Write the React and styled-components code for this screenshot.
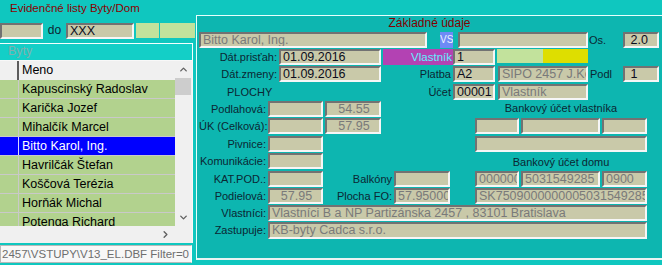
import React from 'react'
import styled, { createGlobalStyle } from 'styled-components'
import { ChevronUp, ChevronDown, ChevronRight } from 'lucide-react'

const GlobalStyle = createGlobalStyle`
  html, body {
    margin: 0;
    padding: 0;
    background: #0fc7bf;
  }
  body {
    font-family: "Liberation Sans", Arial, sans-serif;
  }
`

const Screen = styled.div`
  width: 662px;
  height: 265px;
  overflow: hidden;
  background: #0fc7bf;
  display: flex;
  flex-direction: column;
`

const TitleBar = styled.div`
  height: 15px;
  flex: none;
  padding-left: 10px;
  color: #8a0000;
  font-size: 11.5px;
  line-height: 17px;
`

const Main = styled.div`
  display: flex;
  align-items: flex-start;
  flex: 1;
  min-height: 0;
`

/* ---------- left side: list of flats ---------- */

const LeftCol = styled.div`
  width: 196px;
  flex: none;
  display: flex;
  flex-direction: column;
  padding-top: 8px;
`

const FilterRow = styled.div`
  display: flex;
  align-items: flex-start;
  height: 16px;
`

const DoLabel = styled.div`
  width: 23px;
  text-align: center;
  font-size: 12px;
  line-height: 15px;
  color: #0c2632;
`

const GreenCell = styled.div`
  width: ${p => p.$w}px;
  height: 15px;
  margin-left: ${p => p.$gap}px;
  background: #c2e29c;
  flex: none;
`

const BytyHeader = styled.div`
  box-sizing: border-box;
  width: 193px;
  height: 17px;
  margin-top: 4px;
  border-top: 1px solid #f4ffff;
  border-right: 1px solid #f4ffff;
  background: #13cfc7;
  color: #7fb0ae;
  font-size: 12.5px;
  line-height: 15px;
  padding-left: 8px;
`

const GridBox = styled.div`
  box-sizing: border-box;
  width: 193px;
  border-top: 1px solid #f8f8f8;
  border-right: 1px solid #f8f8f8;
  background: #f0f0f0;
  display: flex;
  flex-direction: column;
`

const GridTop = styled.div`
  display: flex;
  height: 165px;
`

const Table = styled.div`
  width: 175px;
  display: flex;
  flex-direction: column;
  overflow: hidden;
`

const HeadRow = styled.div`
  display: flex;
  height: 19px;
  flex: none;
  background: #f0f0f0;
  font-size: 12.5px;
  line-height: 19px;
`

const HeadFirst = styled.div`
  width: 17px;
  border-right: 2px solid #5c5c5c;
`

const HeadName = styled.div`
  padding-left: 3px;
  color: #000;
`

const DataRow = styled.div`
  box-sizing: border-box;
  display: flex;
  height: 19px;
  flex: none;
  background: ${p => (p.$sel ? '#0000ff' : '#b2d28e')};
  border-bottom: 1px solid #c9c9c9;
  font-size: 12.5px;
  line-height: 18px;
  color: ${p => (p.$sel ? '#ffffff' : '#000000')};
`

const RowMark = styled.div`
  width: 18px;
  border-right: 1px solid ${p => (p.$sel ? '#d8d8ff' : '#c9c9c9')};
`

const RowName = styled.div`
  padding-left: 3px;
  white-space: nowrap;
`

const VScroll = styled.div`
  width: 16px;
  display: flex;
  flex-direction: column;
  background: #f0f0f0;
  color: #606060;
`

const ArrowBox = styled.div`
  height: 17px;
  display: flex;
  align-items: center;
  justify-content: center;
  flex: none;
`

const Thumb = styled.div`
  height: 17px;
  background: #cdcdcd;
  flex: none;
`

const ScrollFill = styled.div`
  flex: 1;
`

const HScroll = styled.div`
  height: 17px;
  display: flex;
  align-items: center;
  justify-content: flex-end;
  padding-right: 21px;
  color: #606060;
`

const StatusBar = styled.div`
  box-sizing: border-box;
  width: 192px;
  height: 18px;
  margin-top: 2px;
  background: #f7f7f7;
  border: 1px solid #b8b8b8;
  border-right-color: #ffffff;
  display: flex;
  justify-content: flex-end;
  overflow: hidden;
  white-space: nowrap;
  color: #6e6e6e;
  font-size: 11.5px;
  line-height: 16px;
  padding-right: 2px;
`

/* ---------- right side: form ---------- */

const RightPanel = styled.div`
  box-sizing: border-box;
  flex: 1;
  height: 245px;
  border-top: 1px solid #e6fffc;
  border-left: 1px solid #e6fffc;
  border-bottom: 2px solid #e8f4f2;
  background: #0db6b0;
`

const PanelTitle = styled.div`
  height: 15px;
  text-align: center;
  color: #820000;
  font-size: 12px;
  line-height: 15px;
`

const Form = styled.div`
  padding: 1px 0 0 2px;
  display: flex;
  flex-direction: column;
`

const Row = styled.div`
  display: flex;
  align-items: flex-start;
  height: 16px;
  margin-top: ${p => p.$mt || 0}px;
`

const Label = styled.div`
  box-sizing: border-box;
  width: ${p => p.$w}px;
  flex: none;
  text-align: ${p => p.$align || 'right'};
  padding: ${p => p.$pad || '0 2px 0 0'};
  color: #0b2733;
  font-size: 11px;
  line-height: 16px;
  white-space: nowrap;
`

const Field = styled.div`
  box-sizing: border-box;
  width: ${p => p.$w}px;
  height: ${p => p.$h || 16}px;
  margin-left: ${p => p.$ml || 0}px;
  flex: none;
  background: #c9c9a9;
  border-style: solid;
  border-width: 2px;
  border-color: #727272 #f6f6f6 #f6f6f6 #727272;
  color: ${p => (p.$dim ? '#7a7a7a' : '#0c0c1c')};
  font-size: 12.5px;
  line-height: 13px;
  padding-left: 2px;
  white-space: nowrap;
  overflow: hidden;
  text-align: ${p => (p.$center ? 'center' : 'left')};
`

const Tag = styled.div`
  box-sizing: border-box;
  width: ${p => p.$w}px;
  height: ${p => p.$h || 16}px;
  margin-left: ${p => p.$ml || 0}px;
  flex: none;
  background: ${p => p.$bg};
  color: ${p => p.$fg || 'transparent'};
  font-size: ${p => p.$fs || 11.5}px;
  line-height: 16px;
  text-align: ${p => p.$align || 'right'};
  padding-right: ${p => p.$pr || 0}px;
  overflow: hidden;
  white-space: nowrap;
`

const LowerGrid = styled.div`
  display: grid;
  grid-template-columns: 252px 172px;
  grid-template-rows: 17px 18px 17px 18px 17px 17px 17px 17px;
  column-gap: 24px;
  margin-top: 1px;
`

const GridRow = styled.div`
  display: flex;
  align-items: flex-start;
  height: 16px;
  grid-column: ${p => (p.$wide ? '1 / -1' : 'auto')};
`

const BankLabel = styled.div`
  text-align: center;
  color: #0b2733;
  font-size: 11px;
  line-height: ${p => p.$lh || 16}px;
`

const people = [
  'Kapuscinský Radoslav',
  'Karička Jozef',
  'Mihalčík Marcel',
  'Bitto Karol, Ing.',
  'Havrilčák Štefan',
  'Koščová Terézia',
  'Horňák Michal',
  'Potenga Richard',
]

const App = () => {
  return (
    <Screen>
      <GlobalStyle />
      <TitleBar>Evidenčné listy Byty/Dom</TitleBar>
      <Main>
        <LeftCol>
          <FilterRow>
            <Field $w={43} />
            <DoLabel>do</DoLabel>
            <Field $w={68}>XXX</Field>
            <GreenCell $w={23} $gap={2} />
            <GreenCell $w={35} $gap={1} />
          </FilterRow>
          <BytyHeader>Byty</BytyHeader>
          <GridBox>
            <GridTop>
              <Table>
                <HeadRow>
                  <HeadFirst />
                  <HeadName>Meno</HeadName>
                </HeadRow>
                {people.map(name => {
                  const sel = name === 'Bitto Karol, Ing.'
                  return (
                    <DataRow key={name} $sel={sel}>
                      <RowMark $sel={sel} />
                      <RowName>{name}</RowName>
                    </DataRow>
                  )
                })}
              </Table>
              <VScroll>
                <ArrowBox>
                  <ChevronUp size={11} strokeWidth={3} />
                </ArrowBox>
                <Thumb />
                <ScrollFill />
                <ArrowBox>
                  <ChevronDown size={11} strokeWidth={3} />
                </ArrowBox>
              </VScroll>
            </GridTop>
            <HScroll>
              <ChevronRight size={11} strokeWidth={3} />
            </HScroll>
          </GridBox>
          <StatusBar>2457\VSTUPY\V13_EL.DBF Filter=0</StatusBar>
        </LeftCol>

        <RightPanel>
          <PanelTitle>Základné údaje</PanelTitle>
          <Form>
            <Row>
              <Field $w={228} $dim>Bitto Karol, Ing.</Field>
              <Tag $w={13} $ml={13} $bg="#6d8af6" $fg="#eef2ff" $align="center" $fs={10}>VS</Tag>
              <Field $w={130} $ml={5} />
              <Label $w={35} $align="left" $pad="0 0 0 1px">Os.</Label>
              <Field $w={36}>&nbsp;2.0</Field>
            </Row>
            <Row $mt={1}>
              <Label $w={80}>Dát.prisťah:</Label>
              <Field $w={102}>01.09.2016</Field>
              <Tag $w={70} $ml={2} $bg="#b342b3" $fg="#5ff0ff" $pr={1}>Vlastník</Tag>
              <Field $w={42}>1</Field>
              <Tag $w={46} $h={14} $ml={2} $bg="#c2e29c" />
              <Tag $w={45} $h={14} $bg="#dede00" />
            </Row>
            <Row $mt={1}>
              <Label $w={80}>Dát.zmeny:</Label>
              <Field $w={102}>01.09.2016</Field>
              <Label $w={72}>Platba</Label>
              <Field $w={42}>A2</Field>
              <Field $w={90} $ml={3} $dim>SIPO 2457 J.Ko</Field>
              <Label $w={35} $align="left" $pad="0 0 0 2px">Podl</Label>
              <Field $w={36}>&nbsp;1</Field>
            </Row>
            <Row $mt={2}>
              <Label $w={80} $align="left" $pad="0 0 0 28px">PLOCHY</Label>
              <Label $w={174}>Účet</Label>
              <Field $w={42}>00001</Field>
              <Field $w={90} $ml={3} $dim>Vlastník</Field>
            </Row>

            <LowerGrid>
              <GridRow>
                <Label $w={69}>Podlahová:</Label>
                <Field $w={55} />
                <Field $w={56} $ml={2} $dim $center>54.55</Field>
              </GridRow>
              <BankLabel $lh={14}>Bankový účet vlastníka</BankLabel>

              <GridRow>
                <Label $w={69}>ÚK (Celková):</Label>
                <Field $w={55} />
                <Field $w={56} $ml={2} $dim $center>57.95</Field>
              </GridRow>
              <GridRow>
                <Field $w={44} />
                <Field $w={79} $ml={2} />
                <Field $w={45} $ml={2} />
              </GridRow>

              <GridRow>
                <Label $w={69}>Pivnice:</Label>
                <Field $w={55} />
              </GridRow>
              <GridRow>
                <Field $w={172} />
              </GridRow>

              <GridRow>
                <Label $w={69}>Komunikácie:</Label>
                <Field $w={55} />
              </GridRow>
              <BankLabel $lh={18}>Bankový účet domu</BankLabel>

              <GridRow>
                <Label $w={69}>KAT.POD.:</Label>
                <Field $w={55} />
                <Label $w={71}>Balkóny</Label>
                <Field $w={56} />
              </GridRow>
              <GridRow>
                <Field $w={44} $dim>000000</Field>
                <Field $w={79} $ml={2} $dim>5031549285</Field>
                <Field $w={45} $ml={2} $dim>0900</Field>
              </GridRow>

              <GridRow>
                <Label $w={69}>Podielová:</Label>
                <Field $w={55} $dim $center>57.95</Field>
                <Label $w={71}>Plocha FO:</Label>
                <Field $w={56} $dim>57.95000</Field>
              </GridRow>
              <GridRow>
                <Field $w={172} $dim>SK7509000000005031549285</Field>
              </GridRow>

              <GridRow $wide>
                <Label $w={69}>Vlastníci:</Label>
                <Field $w={379} $dim>Vlastníci B a NP Partizánska 2457 , 83101 Bratislava</Field>
              </GridRow>
              <GridRow $wide>
                <Label $w={69}>Zastupuje:</Label>
                <Field $w={379} $h={17} $dim>KB-byty Čadca s.r.o.</Field>
              </GridRow>
            </LowerGrid>
          </Form>
        </RightPanel>
      </Main>
    </Screen>
  )
}

export default App
